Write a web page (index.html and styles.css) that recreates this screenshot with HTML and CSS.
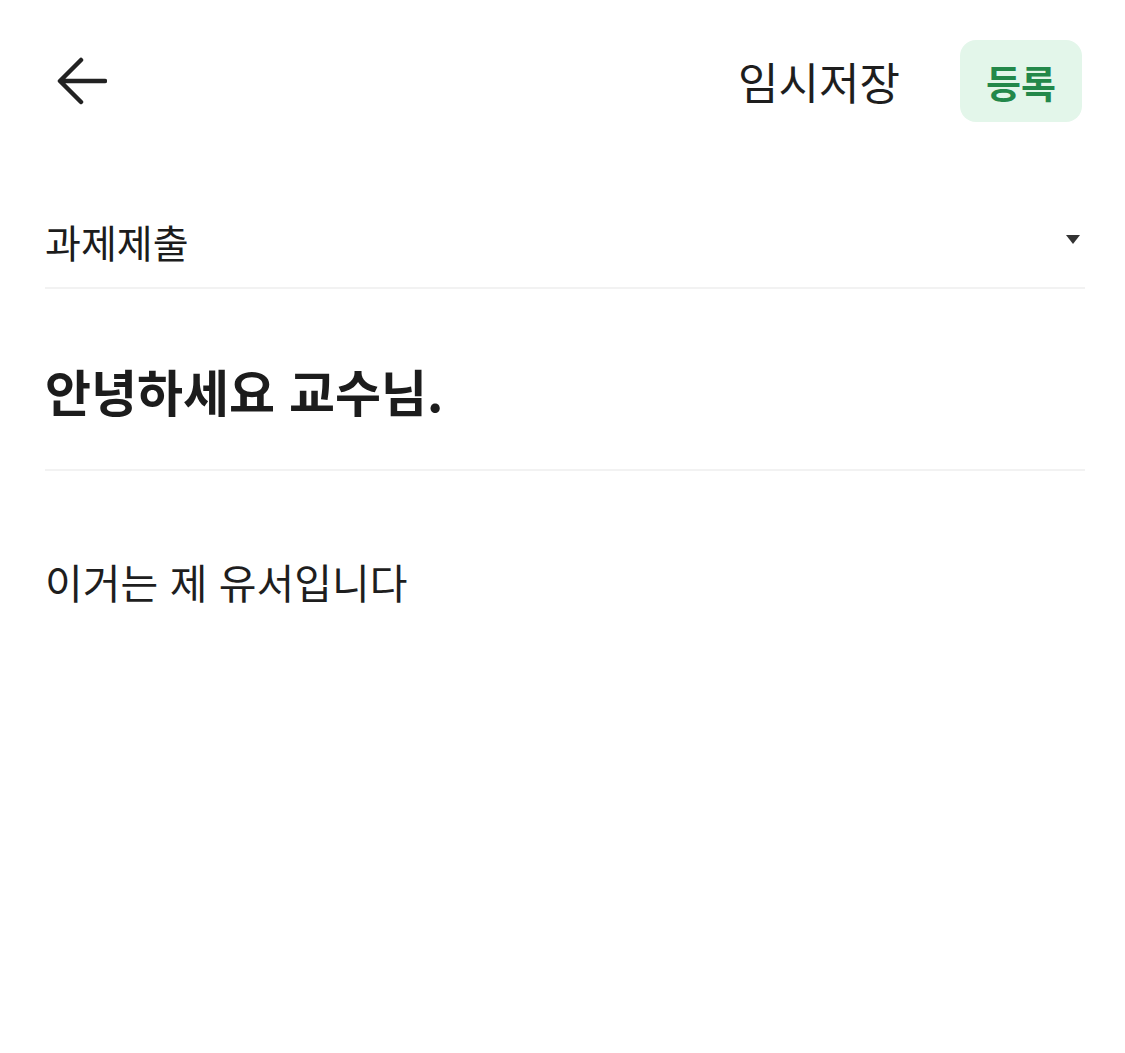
FILE: index.html
```html
<!DOCTYPE html>
<html lang="ko">
<head>
  <meta charset="UTF-8">
  <meta name="viewport" content="width=device-width, initial-scale=1.0">
  <title>과제제출</title>
  <link rel="stylesheet" href="styles.css">
</head>
<body>
  <div class="page">
    <!-- 상단 바 -->
    <div class="top-bar">
      <button class="back-btn" aria-label="뒤로">
        <svg width="52" height="48" viewBox="0 0 52 48">
          <path d="M50 24 H6 M26 3 L5 24 L26 45" fill="none" stroke="#222" stroke-width="4.5" stroke-linecap="round" stroke-linejoin="round"/>
        </svg>
      </button>
      <div class="top-actions">
        <span class="draft">임시저장</span>
        <button class="submit-btn">등록</button>
      </div>
    </div>

    <!-- 게시판 선택 -->
    <div class="board-select">
      <span>과제제출</span>
      <span class="caret"></span>
    </div>

    <!-- 제목 -->
    <div class="title-row">안녕하세요 교수님.</div>

    <!-- 본문 -->
    <div class="body-text">이거는 제 유서입니다</div>
  </div>
</body>
</html>
```

FILE: styles.css
```css
body {
  margin: 0;
  background: #fff;
  color: #1c1c1c;
  font-family: "Noto Sans CJK KR", "Noto Sans", sans-serif;
}

.page {
  width: 1125px;
  height: 1053px;
  padding: 0 40px 0 45px;
  box-sizing: border-box;
}

/* 상단 바 */
.top-bar {
  height: 162px;
  display: flex;
  align-items: center;
  justify-content: space-between;
}

.back-btn {
  background: none;
  border: none;
  padding: 0;
  margin-left: 10px;
  display: flex;
  cursor: pointer;
}

.top-actions {
  display: flex;
  align-items: center;
  gap: 60px;
  margin-right: 3px;
}

.draft {
  font-size: 44px;
  color: #1e1e1e;
}

.submit-btn {
  width: 122px;
  height: 82px;
  border: none;
  border-radius: 16px;
  background-color: #e3f6ea;
  color: #23884a;
  font-family: inherit;
  font-size: 38px;
  font-weight: bold;
  cursor: pointer;
}

/* 게시판 선택 */
.board-select {
  height: 94px;
  margin-top: 33px;
  display: flex;
  align-items: center;
  justify-content: space-between;
  border-bottom: 2px solid #f2f2f2;
  font-size: 39px;
  box-sizing: border-box;
}

.caret {
  width: 0;
  height: 0;
  border-left: 7px solid transparent;
  border-right: 7px solid transparent;
  border-top: 9px solid #333;
  margin-right: 5px;
  margin-bottom: 4px;
}

/* 제목 */
.title-row {
  padding: 71px 0 49px;
  line-height: 60px;
  border-bottom: 2px solid #f2f2f2;
  font-size: 50px;
  font-weight: bold;
}

/* 본문 */
.body-text {
  padding-top: 85px;
  line-height: 50px;
  font-size: 41px;
  color: #1e1e1e;
}
```
